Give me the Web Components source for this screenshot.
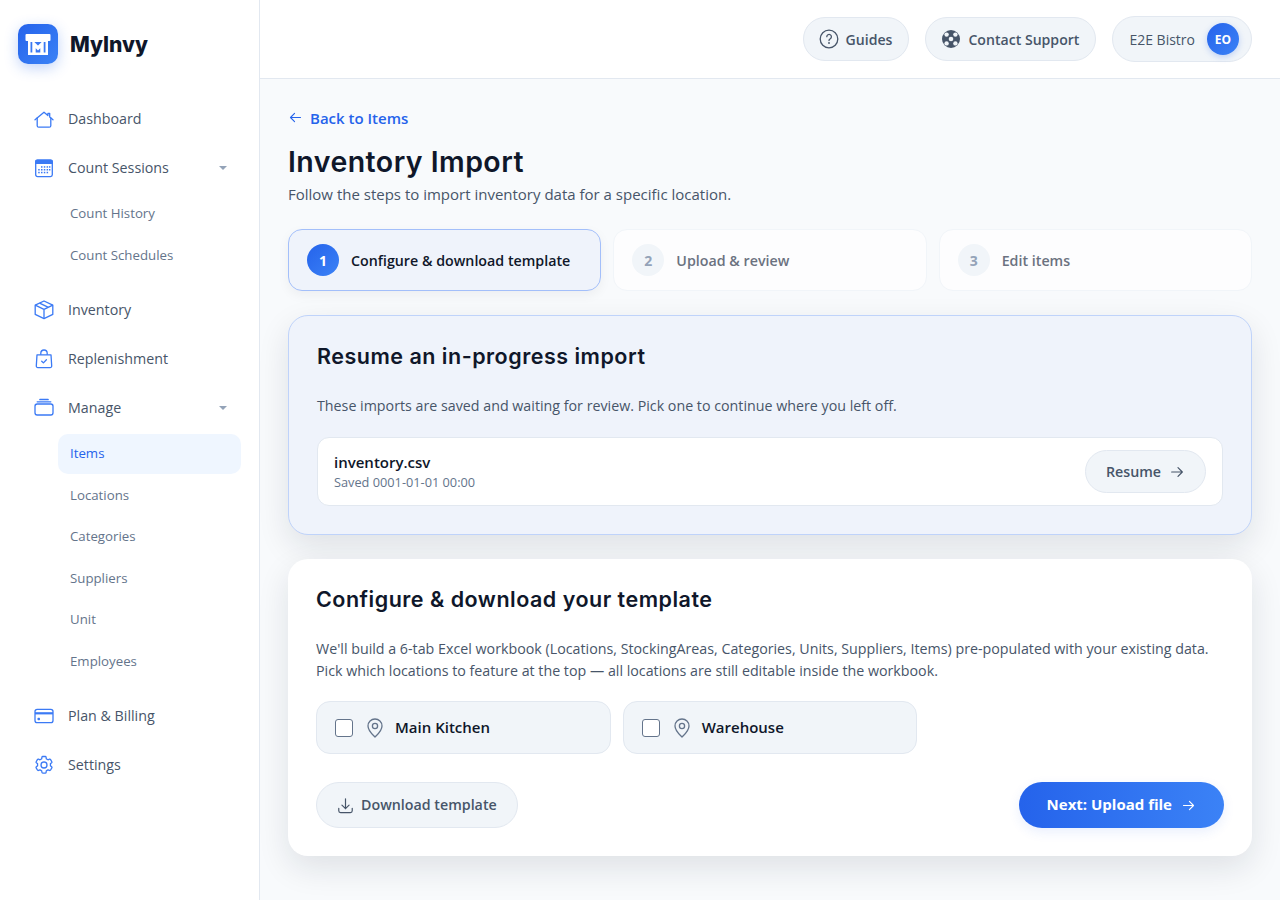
<!DOCTYPE html>
<html lang="en">
<head>
<meta charset="utf-8">
<title>MyInvy</title>
<style>
html,body{margin:0;padding:0;height:100%;background:#f8fafc;}
body{font-family:"Open Sans","Noto Sans",sans-serif;color:#0f172a;overflow:hidden;}
</style>
</head>
<body>
<app-shell>
  <side-bar slot="side">
    <brand-logo></brand-logo>
    <nav-item icon="home">Dashboard</nav-item>
    <nav-item icon="calendar" caret>Count Sessions</nav-item>
    <sub-list>
      <sub-item>Count History</sub-item>
      <sub-item>Count Schedules</sub-item>
    </sub-list>
    <nav-item icon="cube">Inventory</nav-item>
    <nav-item icon="bag">Replenishment</nav-item>
    <nav-item icon="stack" caret>Manage</nav-item>
    <sub-list>
      <sub-item active>Items</sub-item>
      <sub-item>Locations</sub-item>
      <sub-item>Categories</sub-item>
      <sub-item>Suppliers</sub-item>
      <sub-item>Unit</sub-item>
      <sub-item>Employees</sub-item>
    </sub-list>
    <nav-item icon="card">Plan &amp; Billing</nav-item>
    <nav-item icon="cog">Settings</nav-item>
  </side-bar>
  <top-bar slot="top">
    <pill-button icon="help">Guides</pill-button>
    <pill-button icon="buoy">Contact Support</pill-button>
    <account-pill initials="EO">E2E Bistro</account-pill>
  </top-bar>
  <page-head>
    <span slot="back">Back to Items</span>
    <span slot="title">Inventory Import</span>
    Follow the steps to import inventory data for a specific location.
  </page-head>
  <step-row>
    <step-card n="1" active>Configure &amp; download template</step-card>
    <step-card n="2">Upload &amp; review</step-card>
    <step-card n="3">Edit items</step-card>
  </step-row>
  <panel-card tone="blue" heading="Resume an in-progress import">
    <panel-text>These imports are saved and waiting for review. Pick one to continue where you left off.</panel-text>
    <resume-row file="inventory.csv" saved="Saved 0001-01-01 00:00"></resume-row>
  </panel-card>
  <panel-card heading="Configure &amp; download your template">
    <panel-text>We'll build a 6-tab Excel workbook (Locations, StockingAreas, Categories, Units, Suppliers, Items) pre-populated with your existing data.<br>Pick which locations to feature at the top — all locations are still editable inside the workbook.</panel-text>
    <chip-grid>
      <location-chip>Main Kitchen</location-chip>
      <location-chip>Warehouse</location-chip>
    </chip-grid>
    <action-row>
      <action-button kind="soft" icon="download">Download template</action-button>
      <action-button kind="primary" icon="arrow-right">Next: Upload file</action-button>
    </action-row>
  </panel-card>
</app-shell>

<script>
const ICONS = {
  home:'<path d="M3 12.800 12 5.200l3.900 3.300V6.300h1.800v3.700l3.300 2.800" stroke-linecap="round" stroke-linejoin="round"/><path d="M5.200 11v7.700c0 .9.600 1.500 1.500 1.500h10.600c.9 0 1.500-.6 1.500-1.500V11" stroke-linecap="round" stroke-linejoin="round"/>',
  calendar:'<rect x="3.700" y="4.200" width="16.600" height="16.400" rx="1.800" /><path d="M3 8h18v-2.200a2.300 2.300 0 0 0-2.300-2.300H5.300A2.300 2.300 0 0 0 3 5.800z" fill="currentColor" stroke="none"/><g fill="currentColor" stroke="none"><rect x="9" y="10.200" width="1.500" height="1.500"/><rect x="11.800" y="10.200" width="1.500" height="1.500"/><rect x="14.600" y="10.200" width="1.500" height="1.500"/><rect x="17" y="10.200" width="1.400" height="1.500"/><rect x="6.200" y="13" width="1.500" height="1.500"/><rect x="9" y="13" width="1.500" height="1.500"/><rect x="11.800" y="13" width="1.500" height="1.500"/><rect x="14.600" y="13" width="1.500" height="1.500"/><rect x="17" y="13" width="1.400" height="1.500"/><rect x="6.200" y="15.800" width="1.500" height="1.500"/><rect x="9" y="15.800" width="1.500" height="1.500"/><rect x="11.800" y="15.800" width="1.500" height="1.500"/><rect x="14.600" y="15.800" width="1.500" height="1.500"/></g>',
  cube:'<path d="M12 3 3.200 7.200v9.200L12 20.600l8.800-4.200V7.200z" stroke-linejoin="round"/><path d="M3.200 7.200 12 11.400l8.800-4.200M12 11.400v9.200M7.600 5.100l8.800 4.200" stroke-linejoin="round"/>',
  bag:'<path d="M8.800 7.800V6.200a3.200 3.200 0 0 1 6.400 0v1.600"/><path d="M5 7.800h14l.7 11.100a1.600 1.600 0 0 1-1.600 1.700H5.900a1.600 1.600 0 0 1-1.600-1.700z" stroke-linejoin="round"/><path d="m9.700 14.200 1.700 1.700 3-3.100" stroke-linecap="round" stroke-linejoin="round"/>',
  stack:'<rect x="3" y="8" width="18" height="11" rx="2.200"/><path d="M5.200 5.800h13.600" stroke-linecap="round"/><path d="M8 3.500h8" stroke-linecap="round" stroke-width="1.700"/>',
  card:'<rect x="3" y="5.300" width="18" height="13.400" rx="2.200"/><path d="M3 8.200h18v2.200H3z" fill="currentColor" stroke="none"/><rect x="5.500" y="13.800" width="2.500" height="2.500" rx=".7" fill="currentColor" stroke="none"/>',
  cog:'<path d="M9.900 4.300a.9.9 0 0 1 .9-.8h2.400a.9.900 0 0 1 .9.800l.2 1.500c.6.2 1.200.6 1.700 1l1.500-.6a.9.900 0 0 1 1.100.4l1.200 2.100a.9.900 0 0 1-.2 1.100l-1.200 1c.1.700.1 1.300 0 2l1.200 1a.9.9 0 0 1 .2 1.100l-1.200 2.100a.9.900 0 0 1-1.100.4l-1.500-.6c-.5.400-1.100.8-1.700 1l-.2 1.500a.9.9 0 0 1-.9.800h-2.400a.9.900 0 0 1-.9-.8l-.2-1.500c-.6-.2-1.200-.6-1.700-1l-1.500.6a.9.900 0 0 1-1.100-.4l-1.200-2.100a.9.900 0 0 1 .2-1.100l1.200-1a7 7 0 0 1 0-2l-1.200-1a.9.900 0 0 1-.2-1.100l1.200-2.100a.9.900 0 0 1 1.100-.4l1.500.6c.5-.4 1.100-.8 1.700-1z" stroke-linejoin="round"/><circle cx="12" cy="12" r="3"/>',
  help:'<circle cx="12" cy="12" r="8.800"/><path d="M9.800 9.700a2.300 2.300 0 1 1 3.500 2c-.8.500-1.300 1-1.300 1.900" stroke-linecap="round"/><circle cx="12" cy="16" r=".9" fill="currentColor" stroke="none"/>',
  buoy:'<circle cx="12" cy="12" r="9" fill="currentColor" stroke="none"/><g fill="#f1f5f9" stroke="none"><circle cx="7.600" cy="7.600" r="2.200"/><circle cx="16.400" cy="7.600" r="2.200"/><circle cx="7.600" cy="16.400" r="2.200"/><circle cx="16.400" cy="16.400" r="2.200"/><circle cx="12" cy="12" r="2.300"/></g>',
  'arrow-left':'<path d="M20 12H4.500M10.500 5.500 4 12l6.500 6.500" stroke-linecap="round" stroke-linejoin="round"/>',
  'arrow-right':'<path d="M4 12h15.500M13.500 5.500 20 12l-6.500 6.500" stroke-linecap="round" stroke-linejoin="round"/>',
  download:'<path d="M3.500 15.500v3.200c0 1.300 1 2.300 2.300 2.300h12.400c1.300 0 2.300-1 2.300-2.300v-3.200" stroke-linecap="round" stroke-linejoin="round"/><path d="M12 3.500v12.500M7.500 11.500 12 16l4.500-4.500" stroke-linecap="round" stroke-linejoin="round"/>',
  pin:'<path d="M12 3c-3.900 0-7 3-7 6.900 0 4.700 4.600 8.600 7 11.100 2.400-2.500 7-6.400 7-11.100C19 6 15.900 3 12 3z" stroke-linejoin="round"/><circle cx="12" cy="10" r="2.600"/>'
};

function define(name, css, html){
  customElements.define(name, class extends HTMLElement{
    connectedCallback(){
      if(this.shadowRoot) return;
      const root = this.attachShadow({mode:'open'});
      root.innerHTML = '<style>'+css+'</style>'+(typeof html==='function'?html(this):html);
    }
  });
}
const svgIcon = (name,size,sw)=>`<svg viewBox="0 0 24 24" width="${size}" height="${size}" fill="none" stroke="currentColor" stroke-width="${sw}" aria-hidden="true" style="display:block;flex:none">${ICONS[name]}</svg>`;

define('app-shell',`
  :host{display:grid;grid-template-columns:260px 1fr;grid-template-rows:79px 1fr;width:1280px;height:900px;overflow:hidden;background:#f8fafc}
  .s{grid-row:1 / 3;display:block}
  .m{padding:28px 28px 0;display:block;min-width:0}
`,`<div class="s"><slot name="side"></slot></div><slot name="top"></slot><div class="m"><slot></slot></div>`);

define('side-bar',`
  :host{display:block;height:900px;box-sizing:border-box;background:#fff;border-right:1px solid #e2e8f0;padding:24px 18px 0}
`,`<slot></slot>`);

define('brand-logo',`
  :host{display:flex;align-items:center;gap:12px;height:40px;margin-bottom:34px}
  .m{width:40px;height:40px;border-radius:10px;background:linear-gradient(135deg,#2563eb,#3b82f6);box-shadow:0 4px 14px rgba(37,99,235,.28);display:flex;align-items:center;justify-content:center}
  .t{font:800 21px/1 "Inter","Liberation Sans",sans-serif;color:#0f172a}
`,`<div class="m"><svg width="26" height="22" viewBox="0 0 26 22" aria-hidden="true"><rect x="0.500" y="1" width="25" height="7" rx="1" fill="#fff"/><path d="M3 8h20v14H3z" fill="#fff"/><path d="M5.500 9h15v10.500h-15z" fill="#3a78f2"/><path d="M9 20.500V11l4 4 4-4v9.500" fill="none" stroke="#fff" stroke-width="3.400"/></svg></div><div class="t">MyInvy</div>`);

define('nav-item',`
  :host{display:flex;align-items:center;height:41px;margin:0 0 8px;padding:0 14px;font-size:14.250px;font-weight:500;line-height:21px;color:#475569}
  .i{color:#3b7af5;margin-right:12px}
  .t{flex:1}
  .c{width:0;height:0;border-left:4px solid transparent;border-right:4px solid transparent;border-top:4.500px solid #94a3b8;margin:1px 0 0 0}
`, el=>`<span class="i">${svgIcon(el.getAttribute('icon'),24,1.300)}</span><span class="t"><slot></slot></span>${el.hasAttribute('caret')?'<span class="c"></span>':''}`);

define('sub-list',`:host{display:block;margin:-2px 0 14px 40px}`,`<slot></slot>`);

define('sub-item',`
  :host{display:block;height:39.500px;line-height:39.500px;margin-bottom:2px;padding:0 12px;border-radius:10px;font-size:13.250px;font-weight:400;color:#64748b;width:183px;box-sizing:border-box}
  :host([active]){background:#eff6ff;color:#2563eb;font-weight:500}
`,`<slot></slot>`);

define('top-bar',`
  :host{display:flex;align-items:center;justify-content:flex-end;gap:16px;background:#fff;border-bottom:1px solid #e2e8f0;padding:0 28px;box-sizing:border-box;height:79px}
`,`<slot></slot>`);

define('pill-button',`
  :host{display:inline-flex;align-items:center;gap:5px;height:44px;box-sizing:border-box;padding:0 16px 0 13px;border:1px solid #e2e8f0;border-radius:22px;background:#f1f5f9;color:#475569;font-size:14.100px;font-weight:600}
`, el=>`${svgIcon(el.getAttribute('icon'),24,1.300)}<slot></slot>`);

define('account-pill',`
  :host{display:inline-flex;align-items:center;gap:12px;height:46px;box-sizing:border-box;padding:0 12px 0 16px;border:1px solid #e2e8f0;border-radius:23px;background:#f1f5f9;color:#475569;font-size:14px;font-weight:500}
  .a{width:32px;height:32px;border-radius:50%;background:linear-gradient(135deg,#2563eb,#3b82f6);box-shadow:0 2px 6px rgba(37,99,235,.25);color:#fff;font-size:12px;font-weight:700;display:flex;align-items:center;justify-content:center}
`, el=>`<slot></slot><span class="a">${el.getAttribute('initials')}</span>`);

define('page-head',`
  :host{display:block}
  .b{display:flex;align-items:center;gap:7px;height:21px;color:#2563eb;font-size:15px;font-weight:600;margin-bottom:13px}
  h1{margin:0;font:600 28.500px/42px "Inter","Liberation Sans",sans-serif;color:#0f172a;letter-spacing:.45px}
  p{margin:0;font-size:15px;line-height:22px;color:#475569}
  .c{height:22px;margin-bottom:24px}
`, ()=>`<div class="b">${svgIcon('arrow-left',15,1.800)}<slot name="back"></slot></div><h1><slot name="title"></slot></h1><p class="c"><slot></slot></p>`);

define('step-row',`:host{display:grid;grid-template-columns:repeat(3,1fr);gap:12px;margin-bottom:24px}`,`<slot></slot>`);

define('step-card',`
  :host{display:flex;align-items:center;gap:12px;height:62px;box-sizing:border-box;padding:0 18px;border:1px solid #f1f5f9;border-radius:14px;background:#fdfdfe;color:#6b7280;font-size:14.250px;font-weight:600}
  :host([active]){background:#eff3fb;border-color:#a3bffa;color:#0f172a;box-shadow:0 4px 12px rgba(15,23,42,.05)}
  .n{width:32px;height:32px;border-radius:50%;flex:none;background:#f1f5f9;color:#94a3b8;font-size:14px;font-weight:700;display:flex;align-items:center;justify-content:center}
  :host([active]) .n{background:linear-gradient(135deg,#2563eb,#3b82f6);color:#fff}
`, el=>`<span class="n">${el.getAttribute('n')}</span><span><slot></slot></span>`);

define('panel-card',`
  :host{display:block;box-sizing:border-box;background:#fff;border-radius:20px;padding:24px 28px 28px;margin-bottom:24px;box-shadow:0 12px 32px rgba(15,23,42,.11)}
  :host([tone=blue]){background:#eff3fb;border:1px solid #bfd3fa}
  h2{margin:0 0 22px;font:600 21.500px/33px "Inter","Liberation Sans",sans-serif;color:#0f172a;letter-spacing:.5px}
`, el=>`<h2>${el.getAttribute('heading').replace(/&/g,'&amp;')}</h2><slot></slot>`);

define('panel-text',`:host{display:block;font-size:14.250px;line-height:22px;color:#475569;margin-bottom:20px}`,`<slot></slot>`);

define('resume-row',`
  :host{display:flex;align-items:center;justify-content:space-between;height:69px;box-sizing:border-box;background:#fff;border:1px solid #e2e8f0;border-radius:12px;padding:0 16px}
  .f{font-size:15px;font-weight:600;color:#0f172a;line-height:21px}
  .s{font-size:12.750px;color:#64748b;line-height:18px}
  .r{display:flex;align-items:center;gap:8px;height:43px;box-sizing:border-box;padding:0 20px;border:1px solid #e2e8f0;border-radius:22px;background:#f1f5f9;color:#475569;font-size:14.250px;font-weight:600}
`, el=>`<div><div class="f">${el.getAttribute('file')}</div><div class="s">${el.getAttribute('saved')}</div></div><div class="r">Resume ${svgIcon('arrow-right',16,1.800)}</div>`);

define('chip-grid',`:host{display:grid;grid-template-columns:repeat(3,1fr);gap:12px;margin:-1px 0 28px}`,`<slot></slot>`);

define('location-chip',`
  :host{display:flex;align-items:center;height:53px;box-sizing:border-box;padding:0 18px;background:#f1f5f9;border:1px solid #e2e8f0;border-radius:14px;color:#0f172a;font-size:15px;font-weight:600}
  .b{width:18px;height:18px;box-sizing:border-box;background:#fff;border:1px solid #64748b;border-radius:3px;margin-right:10px;flex:none}
  .p{color:#64748b;margin-right:8px}
  .l{margin-bottom:2px}
`, ()=>`<span class="b"></span><span class="p">${svgIcon('pin',24,1.300)}</span><span class="l"><slot></slot></span>`);

define('action-row',`:host{display:flex;justify-content:space-between;align-items:center}`,`<slot></slot>`);

define('action-button',`
  :host{display:inline-flex;align-items:center;height:46px;box-sizing:border-box;border-radius:23px;font-size:14.250px}
  :host([kind=soft]){gap:6.500px;padding:0 20px 0 18.500px;background:#f1f5f9;border:1px solid #e2e8f0;color:#475569;font-weight:600}
  :host([kind=primary]){flex-direction:row-reverse;gap:9px;padding:0 28px;background:linear-gradient(90deg,#2563eb,#3b82f6);color:#fff;font-size:15px;font-weight:700;box-shadow:0 4px 12px rgba(37,99,235,.1)}
  .l{margin-bottom:2px}
`, el=>{const p=el.getAttribute('kind')==='primary';return `${svgIcon(el.getAttribute('icon'),p?15:19,p?1.800:1.500)}<span class="l"><slot></slot></span>`;});
</script>
</body>
</html>
